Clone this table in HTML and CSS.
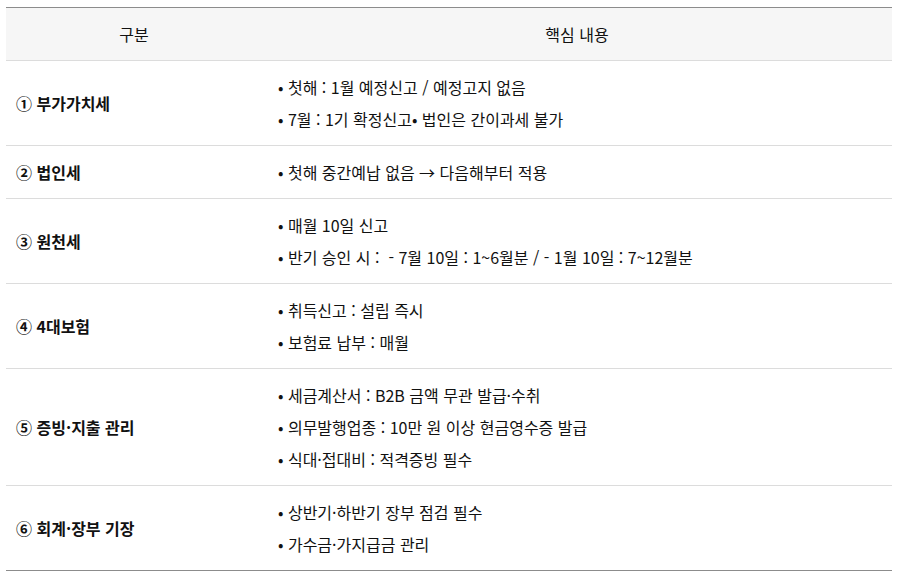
FILE: index.html
```html
<!DOCTYPE html>
<html lang="ko">
<head>
<meta charset="utf-8">
<link rel="stylesheet" href="styles.css">
</head>
<body>
<table class="tax-table">
  <thead>
    <tr>
      <th class="col-cat">구분</th>
      <th class="col-body">핵심 내용</th>
    </tr>
  </thead>
  <tbody>
    <tr>
      <td class="cat">① 부가가치세</td>
      <td class="body">
        <ul class="items">
          <li>• 첫해 : 1월 예정신고 / 예정고지 없음</li>
          <li>• 7월 : 1기 확정신고• 법인은 간이과세 불가</li>
        </ul>
      </td>
    </tr>
    <tr>
      <td class="cat">② 법인세</td>
      <td class="body">
        <ul class="items">
          <li>• 첫해 중간예납 없음 → 다음해부터 적용</li>
        </ul>
      </td>
    </tr>
    <tr>
      <td class="cat">③ 원천세</td>
      <td class="body">
        <ul class="items">
          <li>• 매월 10일 신고</li>
          <li>• 반기 승인 시 :&nbsp; - 7월 10일 : 1~6월분 / - 1월 10일 : 7~12월분</li>
        </ul>
      </td>
    </tr>
    <tr>
      <td class="cat">④ 4대보험</td>
      <td class="body">
        <ul class="items">
          <li>• 취득신고 : 설립 즉시</li>
          <li>• 보험료 납부 : 매월</li>
        </ul>
      </td>
    </tr>
    <tr>
      <td class="cat">⑤ 증빙·지출 관리</td>
      <td class="body">
        <ul class="items">
          <li>• 세금계산서 : B2B 금액 무관 발급·수취</li>
          <li>• 의무발행업종 : 10만 원 이상 현금영수증 발급</li>
          <li>• 식대·접대비 : 적격증빙 필수</li>
        </ul>
      </td>
    </tr>
    <tr>
      <td class="cat">⑥ 회계·장부 기장</td>
      <td class="body">
        <ul class="items">
          <li>• 상반기·하반기 장부 점검 필수</li>
          <li>• 가수금·가지급금 관리</li>
        </ul>
      </td>
    </tr>
  </tbody>
</table>
</body>
</html>
```

FILE: styles.css
```css
html, body {
  margin: 0;
  padding: 0;
  background: #ffffff;
}
body {
  padding: 7px 6px;
  font-family: "Noto Sans CJK KR", "Noto Sans", sans-serif;
  font-size: 16px;
  color: #111;
}
.tax-table {
  width: 886px;
  border-collapse: collapse;
  border-top: 1px solid #8c8c8c;
  border-bottom: 1px solid #8c8c8c;
}
.tax-table th {
  background: #f6f6f6;
  font-weight: 400;
  text-align: center;
  padding: 10px;
  line-height: 32px;
  border-bottom: 1px solid #dcdcdc;
}
.col-cat { width: 236px; }
.tax-table td {
  border-bottom: 1px solid #dcdcdc;
  vertical-align: middle;
}
.tax-table tr:last-child td { border-bottom: none; }
.cat {
  padding: 10px;
  font-weight: 600;
  line-height: 32px;
}
.body {
  padding: 10px 16px;
}
.items {
  list-style: none;
  margin: 0;
  padding: 0;
}
.items li {
  line-height: 32px;
}
```
